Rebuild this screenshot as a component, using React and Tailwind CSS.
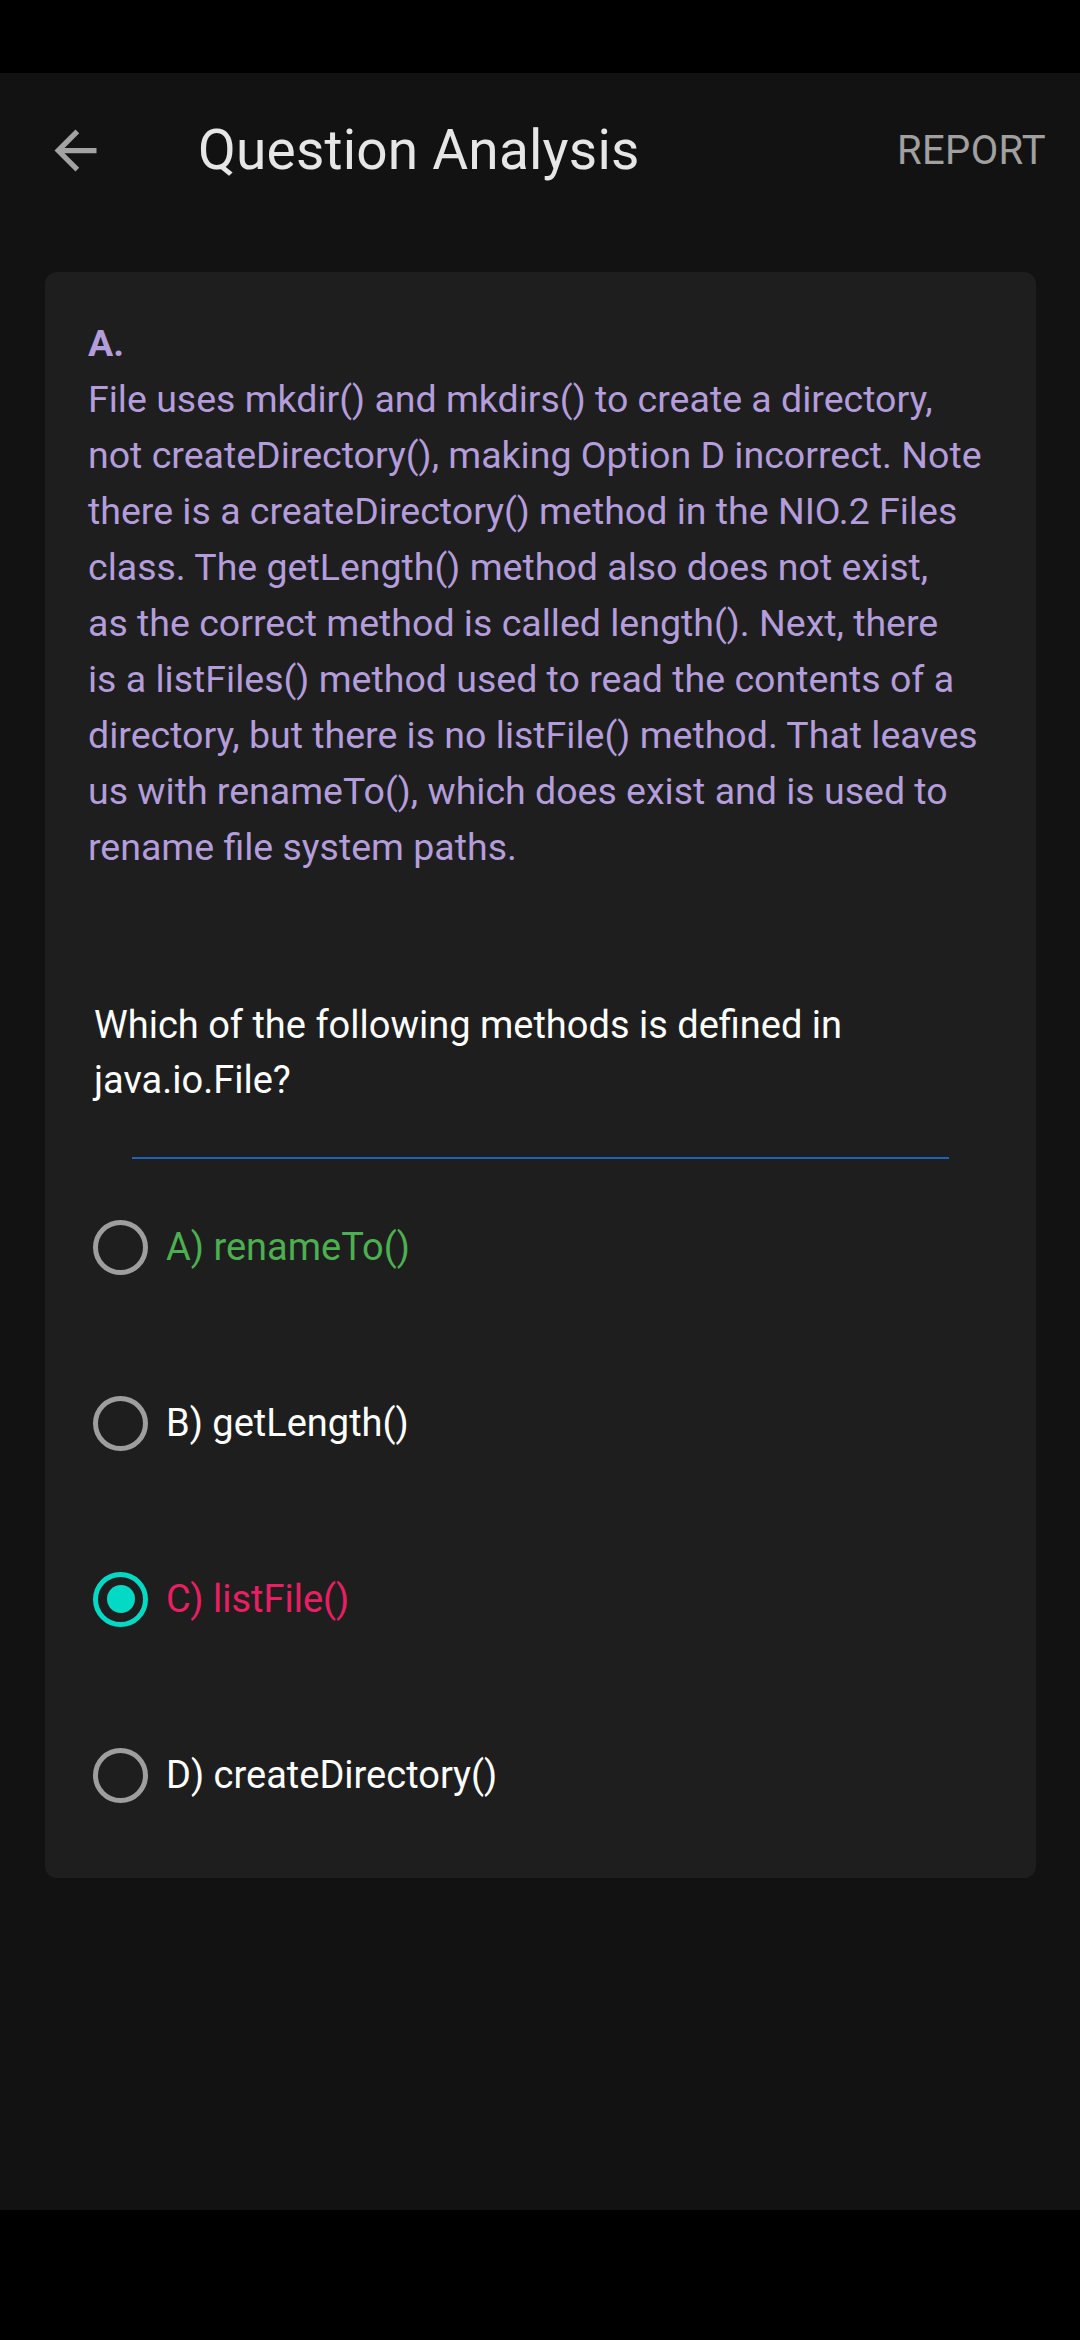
const explanationLines = [
  'File uses mkdir() and mkdirs() to create a directory,',
  'not createDirectory(), making Option D incorrect. Note',
  'there is a createDirectory() method in the NIO.2 Files',
  'class. The getLength() method also does not exist,',
  'as the correct method is called length(). Next, there',
  'is a listFiles() method used to read the contents of a',
  'directory, but there is no listFile() method. That leaves',
  'us with renameTo(), which does exist and is used to',
  'rename file system paths.',
]

const options = [
  { label: 'A) renameTo()', color: 'text-[#4caf50]', checked: false },
  { label: 'B) getLength()', color: 'text-white', checked: false },
  { label: 'C) listFile()', color: 'text-[#e91e63]', checked: true },
  { label: 'D) createDirectory()', color: 'text-white', checked: false },
]

function Radio({ checked }) {
  if (checked) {
    return (
      <span className="flex items-center justify-center w-[55px] h-[55px] rounded-full border-[5px] border-[#03dac5] shrink-0">
        <span className="w-[28px] h-[28px] rounded-full bg-[#03dac5]" />
      </span>
    )
  }
  return <span className="w-[55px] h-[55px] rounded-full border-[5px] border-[#9e9e9e] shrink-0" />
}

export default function App() {
  return (
    <div className="w-[1080px] h-[2340px] flex flex-col bg-black font-['Roboto',sans-serif]">
      {/* status bar */}
      <div className="h-[73px] bg-black shrink-0" />

      <main className="flex-1 bg-[#121212] flex flex-col">
        {/* toolbar */}
        <header className="h-[155px] flex items-center pl-[44px] pr-[34px]">
          <svg width="63" height="63" viewBox="0 0 24 24" className="shrink-0">
            <path fill="#a3a3a3" d="M20 11H7.83l5.59-5.59L12 4l-8 8 8 8 1.41-1.41L7.83 13H20v-2z" />
          </svg>
          <h1 className="ml-[91px] text-[55px] leading-none text-[#e6e6e6] tracking-[0.2px]">Question Analysis</h1>
          <button className="ml-auto text-[40px] leading-none text-[#a0a0a0] tracking-[0.3px]">REPORT</button>
        </header>

        {/* card */}
        <section className="mt-[44px] ml-[45px] mr-[44px] bg-[#1e1e1e] rounded-[12px] pt-[43px] pb-[15px]">
          <div className="px-[43px] text-[37.5px] leading-[56px] text-[#b39ddb]">
            <div className="font-bold">A.</div>
            <p className="whitespace-nowrap">
              {explanationLines.map((line, i) => (
                <span key={i} className="block">{line}</span>
              ))}
            </p>
          </div>

          <p className="mt-[123px] pl-[49px] pr-[60px] text-[38px] leading-[55px] text-white">
            Which of the following methods is defined in java.io.File?
          </p>

          <div className="mt-[49px] mx-[87px] h-[2px] bg-[#1e63b8]" />

          <div className="flex flex-col">
            {options.map(o => (
              <div key={o.label} className="h-[176px] flex items-center pl-[48px] gap-[18px]">
                <Radio checked={o.checked} />
                <span className={`text-[38px] leading-none ${o.color}`}>{o.label}</span>
              </div>
            ))}
          </div>
        </section>

        <div className="flex-1" />
      </main>

      {/* nav bar */}
      <div className="h-[130px] bg-black shrink-0" />
    </div>
  )
}
